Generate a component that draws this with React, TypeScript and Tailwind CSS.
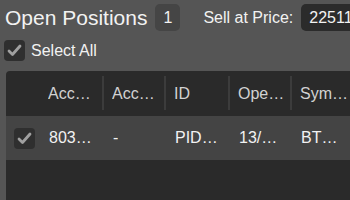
import React from "react";

function Check({ className = "" }: { className?: string }) {
  return (
    <div className={"w-[21px] h-[21px] rounded-[4px] bg-[#2f2f2f] " + className}>
      <svg width="21" height="21" viewBox="0 0 21 21">
        <path d="M5 11 L8.5 14.5 L16 6" fill="none" stroke="#a0a0a0" strokeWidth="2.8" strokeLinecap="round" strokeLinejoin="round" />
      </svg>
    </div>
  );
}

const cols = [
  { w: "w-[64px]", head: "Account", hw: "max-w-[48px]", val: "80312345", vw: "max-w-[48px]" },
  { w: "w-[62px]", head: "Account Name", hw: "max-w-[48px]", val: "-", vw: "max-w-[48px]" },
  { w: "w-[64px]", head: "ID", hw: "max-w-[48px]", val: "PID12345", vw: "max-w-[48px]" },
  { w: "w-[62px]", head: "Open Time", hw: "max-w-[50px]", val: "13/05/2024", vw: "max-w-[44px]" },
  { w: "w-[64px]", head: "Symbol", hw: "max-w-[52px]", val: "BTCUSD", vw: "max-w-[44px]" },
];

export default function App() {
  return (
    <div className="w-[350px] h-[200px] bg-[#555555] overflow-hidden font-['Liberation_Sans',Arial,sans-serif] text-[#f2f2f2]">
      <div className="flex items-center h-[27px] mt-[4px] pl-[5px] whitespace-nowrap">
        <span className="text-[21px] leading-none">Open Positions</span>
        <span className="ml-[8px] w-[25px] h-[27px] shrink-0 rounded-[5px] bg-[#454545] flex items-center justify-center text-[16px]">1</span>
        <span className="ml-[23px] text-[16px] leading-none">Sell at Price:</span>
        <div className="ml-[8px] h-[27px] w-[90px] shrink-0 bg-[#2b2b2b] rounded-l-[5px] pl-[8px] flex items-center text-[16px]">22511.50</div>
      </div>
      <div className="flex items-center mt-[9px] pl-[4px] h-[21px]">
        <Check />
        <span className="ml-[6px] text-[16px] leading-none">Select All</span>
      </div>
      <div className="mt-[10px] ml-[6px] w-[400px] h-[200px] bg-[#2a2a2a] rounded-tl-[4px]">
        <div className="flex h-[45px] items-center">
          <div className="w-[34px] shrink-0" />
          {cols.map((c, i) => (
            <div key={i} className={c.w + " shrink-0 h-full flex items-center relative pl-[8px]"}>
              <span className={c.hw + " truncate text-[16px] text-[#d2d2d2]"}>{c.head}</span>
              <div className="absolute right-0 top-[5px] bottom-[6px] w-[2px] bg-[#3c3c3c]" />
            </div>
          ))}
        </div>
        <div className="flex h-[44px] items-center bg-[#444444]">
          <div className="w-[34px] shrink-0 flex items-center justify-center pl-[2px]">
            <Check />
          </div>
          {cols.map((c, i) => (
            <div key={i} className={c.w + " shrink-0 flex items-center pl-[9px]"}>
              <span className={c.vw + " truncate text-[16px] text-[#f2f2f2]"}>{c.val}</span>
            </div>
          ))}
        </div>
      </div>
    </div>
  );
}
